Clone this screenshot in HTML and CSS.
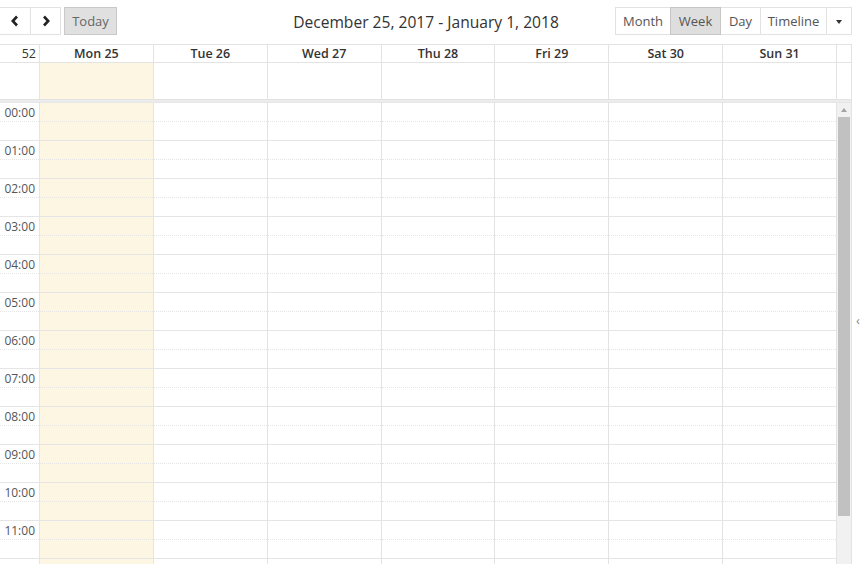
FILE: index.html
```html
<!DOCTYPE html>
<html>
<head>
<meta charset="utf-8">
<link rel="stylesheet" href="styles.css">
</head>
<body>
<div class="page">
  <div class="cal">
    <div class="toolbar">
      <div class="tb-left">
        <div class="btn-group">
          <button class="btn btn-prev"><svg width="10" height="12" viewBox="0 0 10 12"><polyline points="7,1.5 2.8,6 7,10.5" fill="none" stroke="#222" stroke-width="2.6"/></svg></button>
          <button class="btn btn-next"><svg width="10" height="12" viewBox="0 0 10 12"><polyline points="3,1.5 7.2,6 3,10.5" fill="none" stroke="#222" stroke-width="2.6"/></svg></button>
        </div>
        <button class="btn btn-today">Today</button>
      </div>
      <h2 class="title">December 25, 2017 - January 1, 2018</h2>
      <div class="tb-right">
        <div class="btn-group">
          <button class="btn w-month">Month</button>
          <button class="btn w-week active">Week</button>
          <button class="btn w-day">Day</button>
          <button class="btn w-timeline">Timeline</button>
          <button class="btn w-more"><span class="caret"></span></button>
        </div>
      </div>
    </div>

    <div class="view">
      <div class="row head">
        <div class="cell axis wk">52</div>
        <div class="cell">Mon 25</div>
        <div class="cell">Tue 26</div>
        <div class="cell">Wed 27</div>
        <div class="cell">Thu 28</div>
        <div class="cell">Fri 29</div>
        <div class="cell">Sat 30</div>
        <div class="cell">Sun 31</div>
        <div class="cell gutter"></div>
      </div>
      <div class="row allday">
        <div class="cell axis"></div>
        <div class="cell today"></div>
        <div class="cell"></div>
        <div class="cell"></div>
        <div class="cell"></div>
        <div class="cell"></div>
        <div class="cell"></div>
        <div class="cell"></div>
        <div class="cell gutter"></div>
      </div>
      <div class="divider"></div>
      <div class="body">
        <div class="grid" id="grid"></div>
        <div class="scrollbar">
          <div class="sb-up"><span class="sb-tri"></span></div>
          <div class="sb-thumb"></div>
        </div>
      </div>
    </div>
  </div>
  <div class="handle">‹</div>
</div>
<script>
  var grid = document.getElementById('grid');
  var hours = 13;
  var cols = ['axis', 'today', '', '', '', '', '', ''];
  cols.forEach(function (c) {
    var col = document.createElement('div');
    col.className = 'col' + (c ? ' ' + c : '');
    for (var h = 0; h < hours; h++) {
      var a = document.createElement('div');
      a.className = 'slot';
      if (c === 'axis' && h < 12) {
        a.textContent = (h < 10 ? '0' + h : h) + ':00';
      }
      var b = document.createElement('div');
      b.className = 'slot minor';
      col.appendChild(a);
      col.appendChild(b);
    }
    grid.appendChild(col);
  });
</script>
</body>
</html>
```

FILE: styles.css
```css
html, body {
  margin: 0;
  padding: 0;
  background: #fff;
  overflow: hidden;
}

body {
  width: 860px;
  height: 564px;
  font-family: "Open Sans", "Noto Sans", "Liberation Sans", sans-serif;
  color: #333;
}

.page {
  display: flex;
  height: 564px;
}

.cal {
  width: 852px;
  flex: none;
}

/* toolbar */
.toolbar {
  display: grid;
  grid-template-columns: 1fr auto 1fr;
  align-items: center;
  height: 44px;
  box-sizing: border-box;
  padding-top: 7px;
  padding-bottom: 9px;
}

.tb-left {
  display: flex;
  align-items: center;
  gap: 3px;
  margin-left: -1px;
}

.tb-right {
  display: flex;
  justify-content: flex-end;
}

.btn-group {
  display: flex;
}

.btn {
  height: 28px;
  box-sizing: border-box;
  border: 1px solid #e2e2e2;
  background: #fff;
  font-family: inherit;
  font-size: 13px;
  color: #555;
  padding: 0;
  margin: 0;
  display: flex;
  align-items: center;
  justify-content: center;
}

.btn-group .btn + .btn {
  margin-left: -1px;
}

.btn-prev { width: 32px; }
.btn-next { width: 31px; }

.btn-today {
  width: 53px;
  background: #e0e0e0;
  border-color: #c9c9c9;
  color: #666;
}

.w-month { width: 56px; }
.w-week { width: 51px; }
.w-day { width: 41px; }
.w-timeline { width: 67px; }
.w-more { width: 26px; }

.btn.active {
  background: #dedede;
  border-color: #c6c6c6;
  position: relative;
  z-index: 1;
}

.caret {
  width: 0;
  height: 0;
  border-left: 3.5px solid transparent;
  border-right: 3.5px solid transparent;
  border-top: 4px solid #333;
  margin-top: 1px;
}

.title {
  margin: 0;
  font-size: 15.6px;
  font-weight: 400;
  color: #333;
  white-space: nowrap;
  padding-top: 2px;
}

/* view */
.view {
  border-top: 1px solid #e3e3e3;
  border-right: 1px solid #e3e3e3;
}

.row {
  display: grid;
  grid-template-columns: 39px repeat(7, 1fr) 15px;
}

.cell {
  border-left: 1px solid #e3e3e3;
  box-sizing: border-box;
}

.cell.axis {
  border-left: none;
}

.head {
  border-bottom: 1px solid #e3e3e3;
}

.head .cell {
  height: 17px;
  font-size: 12.5px;
  font-weight: 600;
  color: #333;
  text-align: center;
  line-height: 17px;
}

.head .cell.wk {
  text-align: right;
  padding-right: 3px;
  font-weight: 400;
}

.allday .cell {
  height: 36px;
}

.allday .cell.today {
  background: #fcf6e3;
  border-left-color: #ebe6d3;
}

.allday .cell.today + .cell {
  border-left-color: #ebe6d3;
}

.divider {
  height: 4px;
  box-sizing: border-box;
  background: #ececec;
  border-top: 1px solid #e3e3e3;
  border-bottom: 1px solid #e6e6e6;
}

/* body */
.body {
  display: grid;
  grid-template-columns: 1fr 15px;
  height: 461px;
  overflow: hidden;
}

.grid {
  display: grid;
  grid-template-columns: 39px repeat(7, 1fr);
  align-items: start;
}

.col {
  border-left: 1px solid #e3e3e3;
}

.col.axis {
  border-left: none;
}

.col.today {
  background: #fcf6e3;
  border-left-color: #ebe6d3;
}

.col.today + .col {
  border-left-color: #ebe6d3;
}

.slot {
  height: 18px;
  border-bottom: 1px dotted #e5e5e5;
  font-size: 12px;
  line-height: 19px;
  color: #555;
  text-align: right;
  padding-right: 4px;
}

.slot.minor {
  border-bottom: 1px solid #e5e5e5;
}

.col.axis .slot {
  padding-right: 4px;
}

.scrollbar {
  border-left: 1px solid #e3e3e3;
  background: #f1f1f1;
  display: flex;
  flex-direction: column;
}

.sb-up {
  height: 14px;
  display: flex;
  align-items: center;
  justify-content: center;
}

.sb-tri {
  width: 0;
  height: 0;
  border-left: 3px solid transparent;
  border-right: 3px solid transparent;
  border-bottom: 4px solid #a3a3a3;
}

.sb-thumb {
  margin: 0 1px 0 1px;
  height: 399px;
  background: #c1c1c1;
}

.handle {
  flex: 1;
  display: flex;
  align-items: flex-start;
  justify-content: flex-end;
  padding-top: 311px;
  padding-right: 0;
  font-size: 13px;
  color: #888;
}
```
